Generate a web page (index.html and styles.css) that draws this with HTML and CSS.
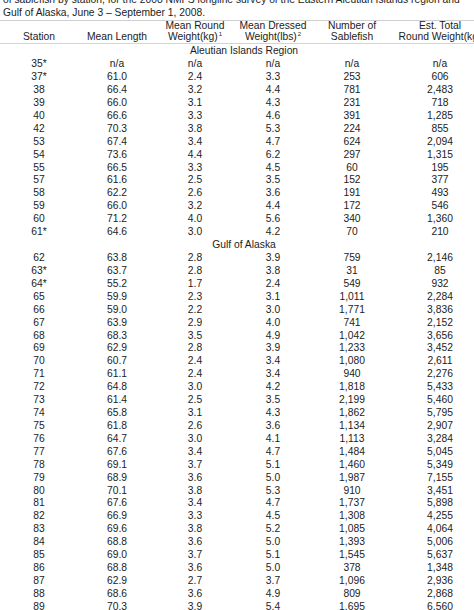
FILE: index.html
```html
<!DOCTYPE html>
<html>
<head>
<meta charset="utf-8">
<link rel="stylesheet" href="styles.css">
</head>
<body>
<div class="page">
  <p class="caption">of sablefish by station, for the 2008 NMFS longline survey of the Eastern Aleutian Islands region and<br>Gulf of Alaska, June 3 &ndash; September 1, 2008.</p>
  <table class="data">
    <colgroup>
      <col class="c1"><col class="c2"><col class="c3"><col class="c4"><col class="c5"><col class="c6">
    </colgroup>
    <thead>
      <tr>
        <th>Station</th>
        <th>Mean Length</th>
        <th>Mean Round<br>Weight(kg)<sup>1</sup></th>
        <th>Mean Dressed<br>Weight(lbs)<sup>2</sup></th>
        <th>Number of<br>Sablefish</th>
        <th>Est. Total<br>Round Weight(kg)</th>
      </tr>
    </thead>
    <tbody>
      <tr class="group"><td colspan="6">Aleutian Islands Region</td></tr>
      <tr><td>35*</td><td>n/a</td><td>n/a</td><td>n/a</td><td>n/a</td><td>n/a</td></tr>
      <tr><td>37*</td><td>61.0</td><td>2.4</td><td>3.3</td><td>253</td><td>606</td></tr>
      <tr><td>38</td><td>66.4</td><td>3.2</td><td>4.4</td><td>781</td><td>2,483</td></tr>
      <tr><td>39</td><td>66.0</td><td>3.1</td><td>4.3</td><td>231</td><td>718</td></tr>
      <tr><td>40</td><td>66.6</td><td>3.3</td><td>4.6</td><td>391</td><td>1,285</td></tr>
      <tr><td>42</td><td>70.3</td><td>3.8</td><td>5.3</td><td>224</td><td>855</td></tr>
      <tr><td>53</td><td>67.4</td><td>3.4</td><td>4.7</td><td>624</td><td>2,094</td></tr>
      <tr><td>54</td><td>73.6</td><td>4.4</td><td>6.2</td><td>297</td><td>1,315</td></tr>
      <tr><td>55</td><td>66.5</td><td>3.3</td><td>4.5</td><td>60</td><td>195</td></tr>
      <tr><td>57</td><td>61.6</td><td>2.5</td><td>3.5</td><td>152</td><td>377</td></tr>
      <tr><td>58</td><td>62.2</td><td>2.6</td><td>3.6</td><td>191</td><td>493</td></tr>
      <tr><td>59</td><td>66.0</td><td>3.2</td><td>4.4</td><td>172</td><td>546</td></tr>
      <tr><td>60</td><td>71.2</td><td>4.0</td><td>5.6</td><td>340</td><td>1,360</td></tr>
      <tr><td>61*</td><td>64.6</td><td>3.0</td><td>4.2</td><td>70</td><td>210</td></tr>
      <tr class="group"><td colspan="6">Gulf of Alaska</td></tr>
      <tr><td>62</td><td>63.8</td><td>2.8</td><td>3.9</td><td>759</td><td>2,146</td></tr>
      <tr><td>63*</td><td>63.7</td><td>2.8</td><td>3.8</td><td>31</td><td>85</td></tr>
      <tr><td>64*</td><td>55.2</td><td>1.7</td><td>2.4</td><td>549</td><td>932</td></tr>
      <tr><td>65</td><td>59.9</td><td>2.3</td><td>3.1</td><td>1,011</td><td>2,284</td></tr>
      <tr><td>66</td><td>59.0</td><td>2.2</td><td>3.0</td><td>1,771</td><td>3,836</td></tr>
      <tr><td>67</td><td>63.9</td><td>2.9</td><td>4.0</td><td>741</td><td>2,152</td></tr>
      <tr><td>68</td><td>68.3</td><td>3.5</td><td>4.9</td><td>1,042</td><td>3,656</td></tr>
      <tr><td>69</td><td>62.9</td><td>2.8</td><td>3.9</td><td>1,233</td><td>3,452</td></tr>
      <tr><td>70</td><td>60.7</td><td>2.4</td><td>3.4</td><td>1,080</td><td>2,611</td></tr>
      <tr><td>71</td><td>61.1</td><td>2.4</td><td>3.4</td><td>940</td><td>2,276</td></tr>
      <tr><td>72</td><td>64.8</td><td>3.0</td><td>4.2</td><td>1,818</td><td>5,433</td></tr>
      <tr><td>73</td><td>61.4</td><td>2.5</td><td>3.5</td><td>2,199</td><td>5,460</td></tr>
      <tr><td>74</td><td>65.8</td><td>3.1</td><td>4.3</td><td>1,862</td><td>5,795</td></tr>
      <tr><td>75</td><td>61.8</td><td>2.6</td><td>3.6</td><td>1,134</td><td>2,907</td></tr>
      <tr><td>76</td><td>64.7</td><td>3.0</td><td>4.1</td><td>1,113</td><td>3,284</td></tr>
      <tr><td>77</td><td>67.6</td><td>3.4</td><td>4.7</td><td>1,484</td><td>5,045</td></tr>
      <tr><td>78</td><td>69.1</td><td>3.7</td><td>5.1</td><td>1,460</td><td>5,349</td></tr>
      <tr><td>79</td><td>68.9</td><td>3.6</td><td>5.0</td><td>1,987</td><td>7,155</td></tr>
      <tr><td>80</td><td>70.1</td><td>3.8</td><td>5.3</td><td>910</td><td>3,451</td></tr>
      <tr><td>81</td><td>67.6</td><td>3.4</td><td>4.7</td><td>1,737</td><td>5,898</td></tr>
      <tr><td>82</td><td>66.9</td><td>3.3</td><td>4.5</td><td>1,308</td><td>4,255</td></tr>
      <tr><td>83</td><td>69.6</td><td>3.8</td><td>5.2</td><td>1,085</td><td>4,064</td></tr>
      <tr><td>84</td><td>68.8</td><td>3.6</td><td>5.0</td><td>1,393</td><td>5,006</td></tr>
      <tr><td>85</td><td>69.0</td><td>3.7</td><td>5.1</td><td>1,545</td><td>5,637</td></tr>
      <tr><td>86</td><td>68.8</td><td>3.6</td><td>5.0</td><td>378</td><td>1,348</td></tr>
      <tr><td>87</td><td>62.9</td><td>2.7</td><td>3.7</td><td>1,096</td><td>2,936</td></tr>
      <tr><td>88</td><td>68.6</td><td>3.6</td><td>4.9</td><td>809</td><td>2,868</td></tr>
      <tr><td>89</td><td>70.3</td><td>3.9</td><td>5.4</td><td>1,695</td><td>6,560</td></tr>
    </tbody>
  </table>
</div>
</body>
</html>
```

FILE: styles.css
```css
html, body {
  margin: 0;
  padding: 0;
  background: #ffffff;
  overflow: hidden;
}

.page {
  width: 474px;
  height: 610px;
  overflow: hidden;
  font-family: "Liberation Sans", Arial, sans-serif;
  font-size: 10.3px;
  color: #1c1c1c;
}

.caption {
  margin: -6px 0 0 3px;
  line-height: 12.9px;
  white-space: nowrap;
}

.data {
  border-collapse: collapse;
  table-layout: fixed;
  width: 488px;
  border-top: 1px solid #cfcfcf;
}

.c1 { width: 78px; }
.c2 { width: 78px; }
.c3 { width: 78px; }
.c4 { width: 78px; }
.c5 { width: 80px; }
.c6 { width: 96px; }

.data th {
  font-weight: normal;
  text-align: center;
  vertical-align: bottom;
  line-height: 10.7px;
  padding: 0;
  border-bottom: 1px solid #d4d4d4;
  white-space: nowrap;
}

.data th sup {
  font-size: 6px;
  line-height: 0;
  vertical-align: 4px;
  margin-left: 1px;
}

.data thead tr th {
  padding-bottom: 0.5px;
}

.data td {
  text-align: center;
  padding: 0;
  height: 12.92px;
  line-height: 12.92px;
  white-space: nowrap;
}

.data tbody tr.group:first-child td {
  padding-top: 1.5px;
}
```
